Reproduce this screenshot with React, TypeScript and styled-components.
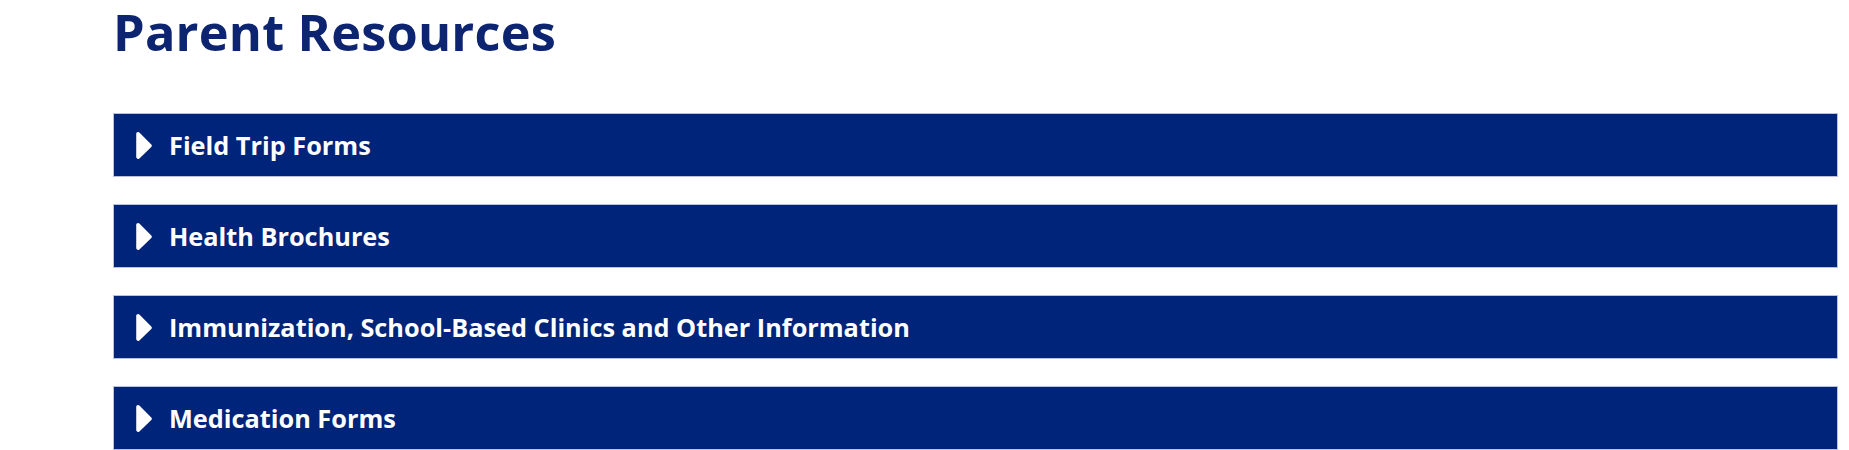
import React from "react";
import styled, { createGlobalStyle } from "styled-components";

const GlobalStyle = createGlobalStyle`
  html, body {
    margin: 0;
    padding: 0;
    background: #ffffff;
  }
  body {
    font-family: "Open Sans", "Noto Sans", Arial, sans-serif;
  }
`;

const Page = styled.main`
  padding: 2px 11px 0 113px;
`;

const Title = styled.h1`
  margin: 0 0 51px;
  font-size: 50.5px;
  line-height: 60px;
  font-weight: 700;
  color: #0d2571;
  letter-spacing: 0.2px;
`;

const Accordion = styled.div`
  display: flex;
  flex-direction: column;
  gap: 27px;
`;

const Header = styled.button`
  box-sizing: border-box;
  display: flex;
  align-items: center;
  gap: 17px;
  width: 100%;
  height: 64px;
  margin: 0;
  padding: 0 0 0 22px;
  border: 1px solid #b9c2dc;
  background: #002479;
  color: #ffffff;
  font-family: "Open Sans", "Noto Sans", Arial, sans-serif;
  font-size: 25.3px;
  font-weight: 700;
  text-align: left;
  cursor: pointer;
`;

const Caret = styled.svg`
  flex: none;
  width: 16px;
  height: 27px;
  display: block;
`;

const CaretIcon = () => (
  <Caret viewBox="0 0 168 292" aria-hidden="true">
    <path
      fill="#ffffff"
      d="M0 271.7V20.3C0 2.5 21.5-6.4 34.1 6.2l128.7 128.7c7.8 7.8 7.8 20.5 0 28.3L34.1 285.8C21.5 298.4 0 289.5 0 271.7z"
    />
  </Caret>
);

const sections = [
  "Field Trip Forms",
  "Health Brochures",
  "Immunization, School-Based Clinics and Other Information",
  "Medication Forms",
];

export default function App() {
  return (
    <>
      <GlobalStyle />
      <Page>
        <Title>Parent Resources</Title>
        <Accordion>
          {sections.map((label) => (
            <Header key={label} type="button" aria-expanded={false}>
              <CaretIcon />
              <span>{label}</span>
            </Header>
          ))}
        </Accordion>
      </Page>
    </>
  );
}
